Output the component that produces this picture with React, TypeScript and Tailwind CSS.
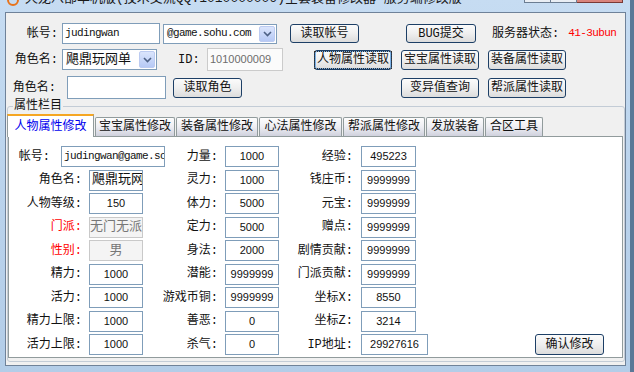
import React from 'react';

const cjk = "font-['Liberation_Mono','Noto_Sans_CJK_SC',monospace]";
const num = "font-['Liberation_Sans','Noto_Sans_CJK_SC',sans-serif]";

type Field = { label: string; value: string; red?: boolean; disabled?: boolean; align?: 'left' | 'center'; wide?: number };

const rows: Field[][] = [
  [
    { label: '帐号:', value: 'judingwan@game.so', align: 'left' },
    { label: '力量:', value: '1000' },
    { label: '经验:', value: '495223' }
  ],
  [
    { label: '角色名:', value: '飓鼎玩网单', align: 'left' },
    { label: '灵力:', value: '1000' },
    { label: '钱庄币:', value: '9999999' }
  ],
  [
    { label: '人物等级:', value: '150' },
    { label: '体力:', value: '5000' },
    { label: '元宝:', value: '9999999' }
  ],
  [
    { label: '门派:', value: '无门无派', red: true, disabled: true },
    { label: '定力:', value: '5000' },
    { label: '赠点:', value: '9999999' }
  ],
  [
    { label: '性别:', value: '男', red: true, disabled: true },
    { label: '身法:', value: '2000' },
    { label: '剧情贡献:', value: '9999999' }
  ],
  [
    { label: '精力:', value: '1000' },
    { label: '潜能:', value: '9999999' },
    { label: '门派贡献:', value: '9999999' }
  ],
  [
    { label: '活力:', value: '1000' },
    { label: '游戏币铜:', value: '9999999' },
    { label: '坐标X:', value: '8550' }
  ],
  [
    { label: '精力上限:', value: '1000' },
    { label: '善恶:', value: '0' },
    { label: '坐标Z:', value: '3214' }
  ],
  [
    { label: '活力上限:', value: '1000' },
    { label: '杀气:', value: '0' },
    { label: 'IP地址:', value: '29927616', wide: 67 }
  ]
];

const tabs = ['人物属性修改', '宝宝属性修改', '装备属性修改', '心法属性修改', '帮派属性修改', '发放装备', '合区工具'];
const tabWidths = ['w-[87px]', 'w-[80px]', 'w-[82px]', 'w-[83px]', 'w-[82px]', 'w-[58px]', 'w-[58px]'];

function Btn({ label, className = '', focused }: { label: string; className?: string; focused?: boolean }) {
  return (
    <div
      className={`flex shrink-0 items-center justify-center rounded-[3px] border border-[#1d3f66] bg-linear-to-b from-[#fbfbfb] via-[#efefef] to-[#dcdcdc] text-[12px] leading-none text-[#111] ${cjk} ${
        focused ? 'shadow-[inset_0_0_0_1px_#7db2e6]' : ''
      } ${className}`}
    >
      {focused ? (
        <span className="px-[2px] py-[2px] outline-1 outline-dotted outline-[#333]">{label}</span>
      ) : (
        label
      )}
    </div>
  );
}

function Chevron() {
  return (
    <svg width="9" height="6" viewBox="0 0 9 6">
      <path d="M1 1 L4.5 4.5 L8 1" fill="none" stroke="#4d6185" strokeWidth="1.6" />
    </svg>
  );
}

function Combo({ value, className = '', textClass = '' }: { value: string; className?: string; textClass?: string }) {
  return (
    <div className={`flex shrink-0 items-center border border-[#7f9db9] bg-white p-px ${className}`}>
      <div className={`flex-1 overflow-hidden whitespace-nowrap pl-[2px] ${textClass}`}>{value}</div>
      <div className="flex h-full w-[16px] items-center justify-center rounded-[2px] border border-[#bccbf1] bg-linear-to-b from-[#dbe5fc] to-[#b6c9f5]">
        <Chevron />
      </div>
    </div>
  );
}

function Cell({ f, first }: { f: Field; first?: boolean }) {
  const base = f.disabled
    ? 'border-[#c9c9c9] bg-[#f4f4f4] text-[#777]'
    : 'border-[#7f9db9] bg-white text-[#111]';
  const isCjk = /[\u4e00-\u9fff]/.test(f.value) || f.align === 'left';
  return (
    <div
      className={`flex h-[21px] shrink-0 items-center overflow-hidden whitespace-nowrap border ${base} ${
        f.align === 'left' ? 'justify-start pl-[2px]' : 'justify-center'
      } ${isCjk ? (first ? `${cjk} text-[11px] tracking-[-0.6px]` : `${cjk} text-[13px]`) : `${num} text-[11px]`}`}
      style={{ width: f.wide ?? (first ? 104 : 54) }}
    >
      {f.value}
    </div>
  );
}

function Label({ f, className }: { f: Field; className: string }) {
  return (
    <div className={`shrink-0 text-right text-[12px] ${cjk} ${f.red ? 'text-[#ff0000]' : 'text-[#111]'} ${className}`}>
      {f.label}
    </div>
  );
}

export default function App() {
  return (
    <div className="flex h-[372px] w-[634px] overflow-hidden bg-linear-to-b from-[#c6dcf2] via-[#bad3ec] to-[#b3cde8]">
      <div className="flex w-[630px] flex-col">
        {/* title bar, mostly cut off */}
        <div className="flex h-[12px] items-start overflow-hidden">
          <svg width="12" height="12" viewBox="0 0 12 12" className="ml-[7px] -mt-[6px] shrink-0">
            <circle cx="6" cy="6" r="5" fill="none" stroke="#e8741c" strokeWidth="2" />
          </svg>
          <div className={`ml-[6px] -mt-[8px] whitespace-nowrap text-[13px] leading-[14px] text-[#1a1a1a] ${cjk}`}>
            天龙八部单机版(技术交流QQ:1010000009)全套装备修改器 服务端修改版
          </div>
          <div className="ml-auto flex">
            <div className="h-[3px] w-[27px] border border-t-0 border-[#6b7d92] bg-[#e9eef4]" />
            <div className="h-[3px] w-[26px] border border-t-0 border-l-0 border-[#6b7d92] bg-[#e9eef4]" />
            <div className="h-[3px] w-[46px] border border-t-0 border-l-0 border-[#7a3a36] bg-[#d9847c]" />
          </div>
          <div className="w-[7px] shrink-0" />
        </div>

        {/* client area */}
        <div className="ml-[5px] flex h-[354px] w-[621px] flex-col border border-[#6f8299] bg-[#f0f0f0]">
          {/* row 1 */}
          <div className={`mt-[10px] flex h-[21px] items-center text-[12px] text-[#111] ${cjk}`}>
            <div className="w-[52px] shrink-0 text-right">帐号:</div>
            <div className="ml-[4px] flex h-[21px] w-[98px] shrink-0 items-center border border-[#7f9db9] bg-white pl-[2px] text-[11px] tracking-[-0.6px]">
              judingwan
            </div>
            <Combo value="@game.sohu.com" className="ml-[3px] h-[20px] w-[114px]" textClass="text-[11px] tracking-[-0.6px]" />
            <Btn label="读取帐号" className="ml-[13px] h-[19px] w-[69px]" />
            <Btn label="BUG提交" className="ml-[47px] h-[19px] w-[70px]" />
            <div className="ml-[16px] shrink-0">服务器状态:</div>
            <div className="ml-[9px] shrink-0 text-[11px] tracking-[-0.6px] text-[#ff0000]">41-3ubun</div>
          </div>

          {/* row 2 */}
          <div className={`mt-[4px] flex h-[23px] items-center text-[12px] text-[#111] ${cjk}`}>
            <div className="w-[52px] shrink-0 text-right">角色名:</div>
            <Combo value="飓鼎玩网单" className="ml-[4px] h-[21px] w-[95px]" textClass="text-[13px]" />
            <div className="ml-[21px] w-[29px] shrink-0 text-[12px]">ID:</div>
            <div className={`flex h-[23px] w-[76px] shrink-0 items-center border border-[#cbcbcb] bg-[#fbfbfb] pl-[2px] text-[11px] text-[#6d6d6d] ${num}`}>
              1010000009
            </div>
            <Btn label="人物属性读取" focused className="ml-[31px] h-[20px] w-[78px]" />
            <Btn label="宝宝属性读取" className="ml-[9px] h-[20px] w-[78px]" />
            <Btn label="装备属性读取" className="ml-[9px] h-[20px] w-[78px]" />
          </div>

          {/* row 3 */}
          <div className={`mt-[5px] flex h-[23px] items-center text-[12px] text-[#111] ${cjk}`}>
            <div className="w-[50px] shrink-0 text-right">角色名:</div>
            <div className="ml-[11px] h-[23px] w-[99px] shrink-0 border border-[#7f9db9] bg-white" />
            <Btn label="读取角色" className="ml-[7px] h-[20px] w-[69px]" />
            <Btn label="变异值查询" className="ml-[159px] h-[20px] w-[78px]" />
            <Btn label="帮派属性读取" className="ml-[9px] h-[20px] w-[78px]" />
          </div>

          {/* group box */}
          <fieldset className="mt-[1px] ml-px w-[618px] rounded-[3px] border border-[#c3ccd6] pb-[3px]">
            <legend className={`ml-[5px] px-px text-[12px] leading-[13px] text-[#111] ${cjk}`}>属性栏目</legend>

            {/* tab strip */}
            <div className={`mt-px flex h-[22px] items-end text-[12px] ${cjk}`}>
              {tabs.map((t, i) =>
                i === 0 ? (
                  <div
                    key={t}
                    className={`relative z-10 -mb-px -ml-px flex h-[23px] shrink-0 items-center justify-center border border-b-0 border-t-[2px] border-[#919b9c] border-t-[#f5a623] bg-white text-[#0000ee] ${tabWidths[i]}`}
                  >
                    {t}
                  </div>
                ) : (
                  <div
                    key={t}
                    className={`ml-px flex h-[19px] shrink-0 items-center justify-center rounded-t-[2px] border border-b-0 border-[#919b9c] bg-linear-to-b from-[#fdfdfd] via-[#eeeef3] to-[#cfd1dd] text-[#111] ${tabWidths[i]}`}
                  >
                    {t}
                  </div>
                )
              )}
            </div>

            {/* tab panel */}
            <div className="flex h-[222px] w-[615px] flex-col gap-[2.5px] border border-[#919b9c] bg-white pt-[9px]">
              {rows.map((r, i) => (
                <div key={i} className="flex h-[21px] items-center">
                  <div className="flex w-[134px] shrink-0 items-center">
                    {i === 0 ? (
                      <>
                        <Label f={r[0]} className="w-[41px]" />
                        <div className="ml-[11px]">
                          <Cell f={r[0]} first />
                        </div>
                      </>
                    ) : (
                      <>
                        <Label f={r[0]} className="w-[73px]" />
                        <div className="ml-[7px]">
                          <Cell f={r[0]} />
                        </div>
                      </>
                    )}
                  </div>
                  <div className="flex w-[136px] shrink-0 items-center">
                    <Label f={r[1]} className="w-[75px]" />
                    <div className="ml-[7px]">
                      <Cell f={r[1]} />
                    </div>
                  </div>
                  <div className="flex shrink-0 items-center">
                    <Label f={r[2]} className="w-[74px]" />
                    <div className="ml-[8px]">
                      <Cell f={{ ...r[2], wide: r[2].wide ?? 55 }} />
                    </div>
                  </div>
                  {i === rows.length - 1 && <Btn label="确认修改" className="mr-[18px] ml-auto h-[21px] w-[69px]" />}
                </div>
              ))}
            </div>
          </fieldset>
        </div>
      </div>
      <div className="w-[4px] bg-[#5a7897]" />
    </div>
  );
}
